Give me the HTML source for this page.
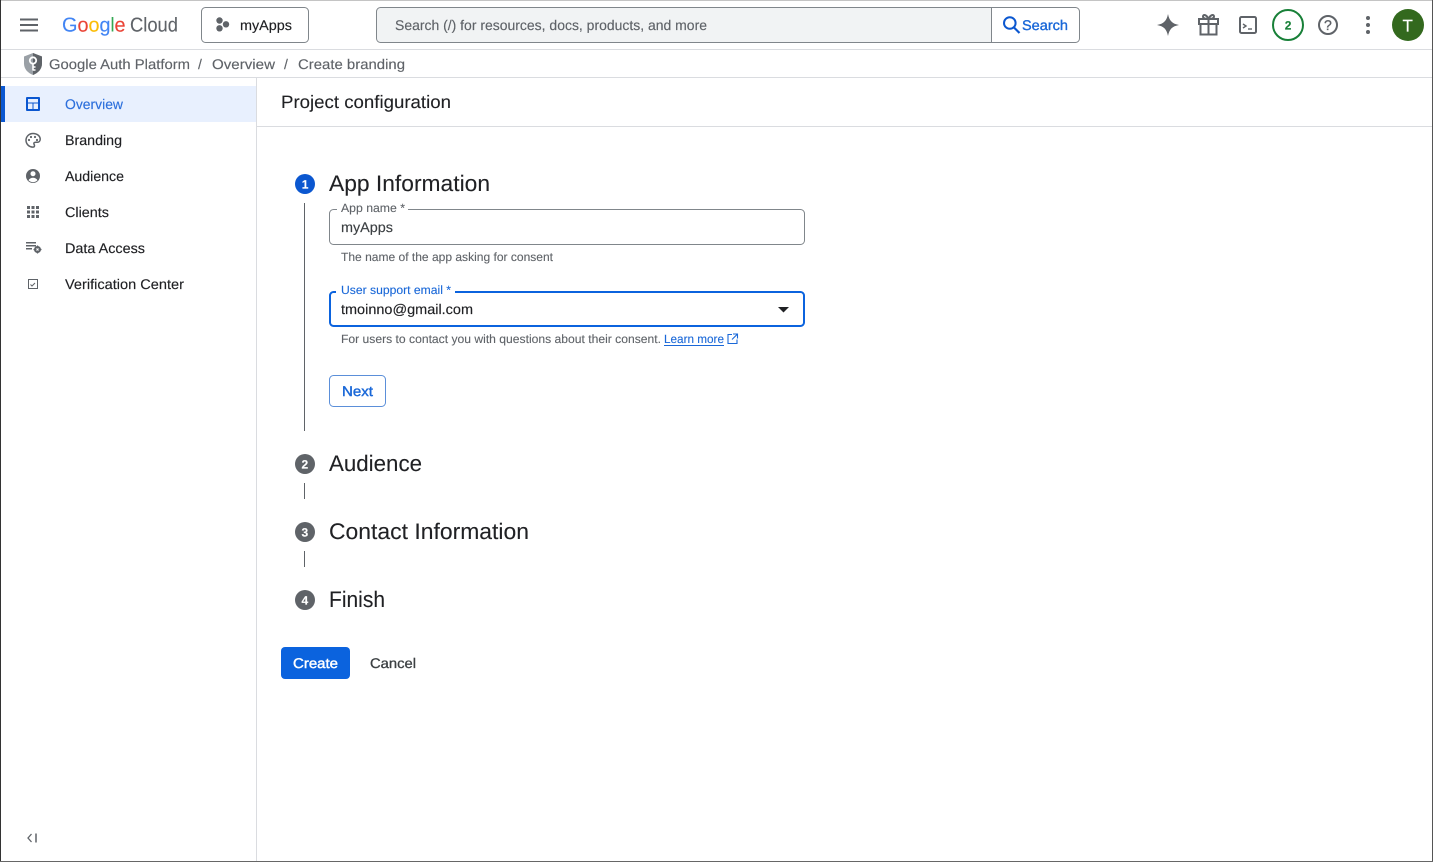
<!DOCTYPE html>
<html lang="en"><head><meta charset="utf-8"><title>Create branding – Google Auth Platform</title>
<style>
html,body{margin:0;padding:0;width:1433px;height:862px;overflow:hidden;background:#fff}
svg{display:block;position:absolute;left:0;top:0}
text{font-family:"Liberation Sans",Arial,sans-serif;font-size:14px;color:#202124;fill:currentColor;stroke:currentColor;stroke-width:.14;text-rendering:geometricPrecision}
.g{color:#5f6368}
.h{font-size:22.5px;stroke-width:.08}
.s{font-size:12px;stroke-width:.1}
.b{color:#1a68d8}
.m{font-weight:700}
.t{stroke-width:.42}
.l{font-size:20px;stroke-width:.1}
</style></head><body>
<svg width="1433" height="862" viewBox="0 0 1433 862" xmlns="http://www.w3.org/2000/svg">
<rect width="1433" height="862" fill="#fff"/>
<!-- header -->
<rect y="49" width="1433" height="1" fill="#dadce0"/>
<rect y="77" width="1433" height="1" fill="#dadce0"/>
<path d="M20 19.500h18M20 25h18M20 30.500h18" stroke="#5f6368" stroke-width="2"/>
<text x="62" y="31.500" class="l" style="color:#4285f4" textLength="15.500" lengthAdjust="spacingAndGlyphs">G</text>
<text x="77.500" y="31.500" class="l" style="color:#ea4335" textLength="11" lengthAdjust="spacingAndGlyphs">o</text>
<text x="88.500" y="31.500" class="l" style="color:#fbbc04" textLength="11" lengthAdjust="spacingAndGlyphs">o</text>
<text x="99.500" y="31.500" class="l" style="color:#4285f4" textLength="11" lengthAdjust="spacingAndGlyphs">g</text>
<text x="110.500" y="31.500" class="l" style="color:#34a853" textLength="4" lengthAdjust="spacingAndGlyphs">l</text>
<text x="114.500" y="31.500" class="l" style="color:#ea4335" textLength="11" lengthAdjust="spacingAndGlyphs">e</text>
<text x="130" y="31.500" class="l" style="color:#5f6368" textLength="48" lengthAdjust="spacingAndGlyphs">Cloud</text>
<rect x="201.500" y="7.500" width="107" height="35" rx="4" fill="#fff" stroke="#80868b"/>
<circle cx="219.500" cy="20.500" r="3.200" fill="#5f6368"/><circle cx="226" cy="24.300" r="3.200" fill="#5f6368"/><circle cx="219.500" cy="28.300" r="3.200" fill="#5f6368"/>
<text x="240" y="30" textLength="52" lengthAdjust="spacingAndGlyphs">myApps</text>
<path d="M380.500 7.500H991.500V42.500H380.500a4 4 0 0 1-4-4V11.500a4 4 0 0 1 4-4z" fill="#f1f3f4" stroke="#80868b"/>
<path d="M991.500 7.500H1075.500a4 4 0 0 1 4 4V38.500a4 4 0 0 1-4 4H991.500z" fill="#fff" stroke="#80868b"/>
<text x="395" y="30" class="g" textLength="312" lengthAdjust="spacingAndGlyphs">Search (/) for resources, docs, products, and more</text>
<circle cx="1009.800" cy="23" r="5.800" fill="none" stroke="#0b57d0" stroke-width="2"/><path d="M1014 27.500l5.500 5.500" stroke="#0b57d0" stroke-width="2.200"/>
<text x="1022" y="30" class="b t" style="stroke-width:.35" textLength="46" lengthAdjust="spacingAndGlyphs">Search</text>
<path d="M1168 14c1.300 6.800 4.200 9.700 11 11-6.800 1.300-9.700 4.200-11 11-1.300-6.800-4.200-9.700-11-11 6.800-1.300 9.700-4.200 11-11z" fill="#5f6368"/>
<path d="M1199 19h19v5h-19zM1200.500 24v10.500h16V24M1208.500 19v15.500M1208.500 19c-2-4.500-5.500-5-5.500-2.500 0 1.800 2.500 2.500 5.500 2.500M1208.500 19c2-4.500 5.500-5 5.500-2.500 0 1.800-2.500 2.500-5.500 2.500" fill="none" stroke="#5f6368" stroke-width="2"/>
<rect x="1240" y="17" width="16" height="16" rx="1.500" fill="none" stroke="#5f6368" stroke-width="2"/>
<path d="M1243 24l3 2-3 2" fill="none" stroke="#5f6368" stroke-width="1.400"/><path d="M1248 29h4" stroke="#5f6368" stroke-width="1.400"/>
<circle cx="1288" cy="25" r="15" fill="#fff" stroke="#188038" stroke-width="2"/>
<text x="1284.700" y="29.500" class="m" style="font-size:12px;color:#188038">2</text>
<circle cx="1328" cy="25" r="9" fill="none" stroke="#5f6368" stroke-width="2"/>
<text x="1324" y="30" style="font-size:14px;color:#5f6368;stroke-width:.35">?</text>
<circle cx="1368" cy="18" r="2" fill="#5f6368"/><circle cx="1368" cy="25" r="2" fill="#5f6368"/><circle cx="1368" cy="32" r="2" fill="#5f6368"/>
<circle cx="1408" cy="25" r="16" fill="#33691e"/>
<text x="1402.500" y="31.500" style="font-size:17px;color:#fff">T</text>
<!-- breadcrumb -->
<path d="M33 53l9 3.500v7c0 5.500-3.800 9.500-9 11.500-5.200-2-9-6-9-11.500v-7z" fill="#9aa0a6"/>
<path d="M33 53l9 3.500v7c0 5.500-3.800 9.500-9 11.500z" fill="#5f6368"/>
<circle cx="33" cy="60.500" r="3.200" fill="none" stroke="#fff" stroke-width="1.800"/><path d="M33 63.500v7M33 67h2.500M33 70h2.500" stroke="#fff" stroke-width="1.600"/>
<text x="49" y="69" class="g" textLength="141" lengthAdjust="spacingAndGlyphs">Google Auth Platform</text>
<text x="198" y="69" class="g">/</text>
<text x="212" y="69" class="g" textLength="63" lengthAdjust="spacingAndGlyphs">Overview</text>
<text x="284" y="69" class="g">/</text>
<text x="298" y="69" class="g" textLength="107" lengthAdjust="spacingAndGlyphs">Create branding</text>
<!-- sidebar -->
<rect x="256" y="78" width="1" height="784" fill="#dadce0"/>
<rect x="1" y="86" width="255" height="36" fill="#e8f0fe"/>
<rect x="1" y="86" width="4" height="36" fill="#0b57d0"/>
<rect x="26" y="97" width="14" height="14" rx="1" fill="#0b57d0"/>
<path d="M28 99h10v3.500h-10zM28 103.500h4.500V109H28zM33.500 103.500h4.500V109h-4.500z" fill="#e8f0fe"/>
<text x="65" y="109" class="b" style="color:#2c6fdc" textLength="58" lengthAdjust="spacingAndGlyphs">Overview</text>
<path d="M33 133.500c-4 0-7 3-7 6.800 0 3.700 3 6.800 6.800 6.800 1.200 0 1.700-.7 1.700-1.500 0-1.200-1-1.400-.6-2.500.3-.8 1-.9 2-.9h1.500c1.700 0 2.800-1.300 2.800-3 0-3.300-3.100-5.700-7.200-5.700z" fill="none" stroke="#5f6368" stroke-width="1.500"/>
<circle cx="29" cy="140" r="1.100" fill="#5f6368"/><circle cx="31" cy="137" r="1.100" fill="#5f6368"/><circle cx="35" cy="137" r="1.100" fill="#5f6368"/><circle cx="37" cy="140" r="1.100" fill="#5f6368"/>
<text x="65" y="145" textLength="57" lengthAdjust="spacingAndGlyphs">Branding</text>
<circle cx="33" cy="176" r="7" fill="#5f6368"/><circle cx="33" cy="173.700" r="2.500" fill="#fff"/><path d="M28.500 180.300c1-1.800 2.700-2.500 4.500-2.500s3.500.7 4.500 2.500c-1.100 1.200-2.700 1.900-4.500 1.900s-3.400-.7-4.500-1.900z" fill="#fff"/>
<text x="65" y="181" textLength="59" lengthAdjust="spacingAndGlyphs">Audience</text>
<path d="M27 206h3v3h-3zM31.500 206h3v3h-3zM36 206h3v3h-3zM27 210.500h3v3h-3zM31.500 210.500h3v3h-3zM36 210.500h3v3h-3zM27 215h3v3h-3zM31.500 215h3v3h-3zM36 215h3v3h-3z" fill="#5f6368"/>
<text x="65" y="217" textLength="44" lengthAdjust="spacingAndGlyphs">Clients</text>
<path d="M26 242.800h10M26 245.800h10M26 248.800h6" stroke="#5f6368" stroke-width="1.500"/>
<circle cx="37.500" cy="249.500" r="2.500" fill="none" stroke="#5f6368" stroke-width="2"/><path d="M37.500 245.500v8M33.500 249.500h8" stroke="#5f6368" stroke-width="1.200"/><circle cx="37.500" cy="249.500" r="1" fill="#fff"/>
<text x="65" y="253" textLength="80" lengthAdjust="spacingAndGlyphs">Data Access</text>
<rect x="28.500" y="279.500" width="9" height="9" fill="none" stroke="#5f6368"/><path d="M30.500 284.500l1.500 1.500 3-3" fill="none" stroke="#5f6368"/>
<text x="65" y="289" textLength="119" lengthAdjust="spacingAndGlyphs">Verification Center</text>
<path d="M31.500 834l-3.500 4 3.500 4" fill="none" stroke="#5f6368" stroke-width="1.300"/><path d="M36 833.500v9" stroke="#5f6368" stroke-width="1.500"/>
<!-- content -->
<text x="281" y="108" style="font-size:18px;stroke-width:.1" textLength="170" lengthAdjust="spacingAndGlyphs">Project configuration</text>
<rect x="257" y="126" width="1176" height="1" fill="#dadce0"/>
<circle cx="305" cy="184" r="10" fill="#0b57d0"/>
<text x="301.700" y="188.500" class="m" style="font-size:12px;color:#fff">1</text>
<text x="329" y="191" class="h" textLength="161" lengthAdjust="spacingAndGlyphs">App Information</text>
<rect x="304" y="203" width="1" height="228" fill="#5f6368"/>
<rect x="329.500" y="209.500" width="475" height="35" rx="4" fill="#fff" stroke="#80868b"/>
<rect x="337" y="205" width="71" height="8" fill="#fff"/>
<text x="341" y="212" class="s g" textLength="64" lengthAdjust="spacingAndGlyphs">App name *</text>
<text x="341" y="232" style="color:#3c4043" textLength="52" lengthAdjust="spacingAndGlyphs">myApps</text>
<text x="341" y="261" class="s g" textLength="212" lengthAdjust="spacingAndGlyphs">The name of the app asking for consent</text>
<rect x="330" y="292" width="474" height="34" rx="3.500" fill="#fff" stroke="#0b63de" stroke-width="2"/>
<rect x="336" y="287" width="119" height="8" fill="#fff"/>
<text x="341" y="294" class="s b" textLength="110" lengthAdjust="spacingAndGlyphs">User support email *</text>
<text x="341" y="314" textLength="132" lengthAdjust="spacingAndGlyphs">tmoinno@gmail.com</text>
<path d="M778 307h11l-5.500 5.500z" fill="#202124"/>
<text x="341" y="343" class="s g" textLength="320" lengthAdjust="spacingAndGlyphs">For users to contact you with questions about their consent.</text>
<text x="664" y="343" class="s b" textLength="60" lengthAdjust="spacingAndGlyphs">Learn more</text>
<rect x="664" y="345" width="60" height="1" fill="#1a68d8"/>
<path d="M732 334.500h-4v9h9v-4M733 334h4.500v4.500M737.500 334l-5.500 5.500" fill="none" stroke="#1a68d8" stroke-width="1.100"/>
<rect x="329.500" y="375.500" width="56" height="31" rx="4" fill="#fff" stroke="#5b8fd9"/>
<text x="342" y="396" class="b t" textLength="31" lengthAdjust="spacingAndGlyphs">Next</text>
<circle cx="305" cy="464" r="10" fill="#5f6368"/>
<text x="301.500" y="468.500" class="m" style="font-size:12px;color:#fff">2</text>
<text x="329" y="471" class="h" textLength="93" lengthAdjust="spacingAndGlyphs">Audience</text>
<rect x="304" y="483" width="1" height="16" fill="#5f6368"/>
<circle cx="305" cy="532" r="10" fill="#5f6368"/>
<text x="301.500" y="536.500" class="m" style="font-size:12px;color:#fff">3</text>
<text x="329" y="539" class="h" textLength="200" lengthAdjust="spacingAndGlyphs">Contact Information</text>
<rect x="304" y="551" width="1" height="16" fill="#5f6368"/>
<circle cx="305" cy="600" r="10" fill="#5f6368"/>
<text x="301.500" y="604.500" class="m" style="font-size:12px;color:#fff">4</text>
<text x="329" y="607" class="h" textLength="56" lengthAdjust="spacingAndGlyphs">Finish</text>
<rect x="281" y="647" width="69" height="32" rx="4" fill="#0b63de"/>
<text x="293" y="668" class="t" style="color:#fff" textLength="45" lengthAdjust="spacingAndGlyphs">Create</text>
<text x="370" y="668" class="t" style="color:#3c4043;stroke-width:.3" textLength="46" lengthAdjust="spacingAndGlyphs">Cancel</text>
<!-- window edges -->
<rect width="1433" height="1" fill="#c4c4c4"/>
<rect width="1" height="862" fill="#333"/>
<rect x="1432" width="1" height="862" fill="#555"/>
<rect y="861" width="1433" height="1" fill="#666"/>
</svg>
</body></html>
